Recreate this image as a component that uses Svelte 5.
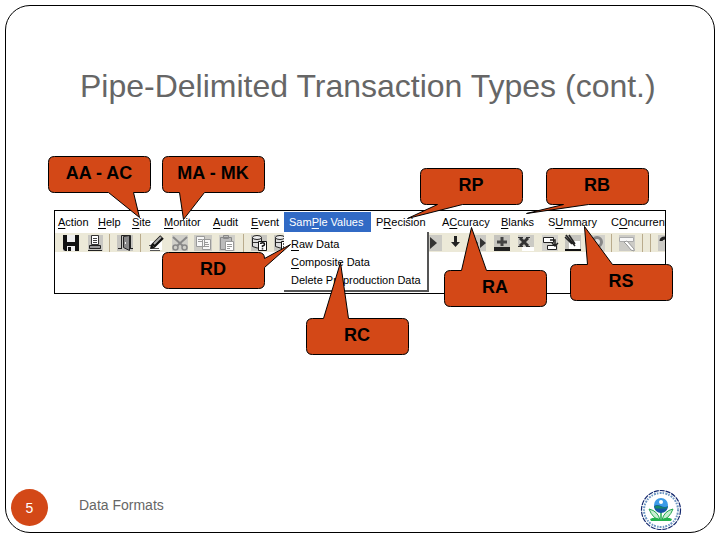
<script>
  const menus = [
    { pre: '', key: 'A', post: 'ction', w: 40 },
    { pre: '', key: 'H', post: 'elp', w: 34 },
    { pre: '', key: 'S', post: 'ite', w: 32 },
    { pre: '', key: 'M', post: 'onitor', w: 49 },
    { pre: '', key: 'A', post: 'udit', w: 38 },
    { pre: '', key: 'E', post: 'vent', w: 36 },
    { pre: 'Sam', key: 'P', post: 'le Values', w: 89, open: true },
    { pre: 'P', key: 'R', post: 'ecision', w: 66 },
    { pre: 'A', key: 'C', post: 'curacy', w: 59 },
    { pre: '', key: 'B', post: 'lanks', w: 47 },
    { pre: 'S', key: 'U', post: 'mmary', w: 63 },
    { pre: 'C', key: 'O', post: 'ncurrent', w: 64 }
  ];

  const tools = [
    ['save', 24], ['print', 23], ['sep', 7], ['door', 24], ['sep', 7],
    ['pen', 24], ['cut', 23], ['copy', 24], ['paste', 24], ['sep', 8],
    ['query', 23], ['run', 23], ['gap', 129], ['play', 24], ['down', 20],
    ['forward', 24], ['plus', 24], ['cross', 24], ['export', 23],
    ['edit', 24], ['lens', 23], ['sep', 7], ['form', 24], ['sep', 6],
    ['sep', 10], ['help', 22]
  ];

  const callouts = [
    { text: 'AA - AC', x: 48, y: 156, tx: 99, tail: 'bottom', a: 60, b: 85, px: 91, py: 61 },
    { text: 'MA - MK', x: 162, y: 156, tx: 213, tail: 'bottom', a: 17, b: 42, px: 21, py: 63 },
    { text: 'RD', x: 162, y: 252, tx: 213, tail: 'right', a: 6, b: 15, px: 128, py: -8 },
    { text: 'RC', x: 306, y: 318, tx: 357, tail: 'top', a: 17, b: 42, px: 34, py: -56 },
    { text: 'RP', x: 420, y: 168, tx: 471, tail: 'bottom', a: 17, b: 42, px: -13, py: 50 },
    { text: 'RB', x: 546, y: 168, tx: 597, tail: 'bottom', a: 17, b: 42, px: -20, py: 45 },
    { text: 'RA', x: 444, y: 270, tx: 495, tail: 'top', a: 17, b: 42, px: 27, py: -43 },
    { text: 'RS', x: 570, y: 264, tx: 621, tail: 'top', a: 17, b: 42, px: 14, py: -38 }
  ];

  function outline(c) {
    const top = c.tail === 'top' ? `H${c.a}L${c.px} ${c.py}L${c.b} 0` : '';
    const right = c.tail === 'right' ? `V${c.a}L${c.px} ${c.py}L102 ${c.b}` : '';
    const bottom = c.tail === 'bottom' ? `H${c.b}L${c.px} ${c.py}L${c.a} 36` : '';
    return `M6 0${top}H96Q102 0 102 6${right}V30Q102 36 96 36${bottom}H6Q0 36 0 30V6Q0 0 6 0Z`;
  }
</script>

<main class="slide">
  <section class="frame">
    <h1>Pipe-Delimited Transaction Types (cont.)</h1>

    <div class="window">
      <nav class="menubar" aria-label="Application menu">
        {#each menus as m}
          <div class="menu" style="width: {m.w}px">
            <button class:open={m.open}>{m.pre}<u>{m.key}</u>{m.post}</button>
            {#if m.open}
              <div class="dropdown">
                <button><u>R</u>aw Data</button>
                <button><u>C</u>omposite Data</button>
                <button>Delete Preproduction Data</button>
              </div>
            {/if}
          </div>
        {/each}
      </nav>

      <div class="toolbar">
        {#each tools as [name, w]}
          {#if name === 'sep' || name === 'gap'}
            <span class={name} style="width: {w}px"></span>
          {:else}
            <button class="tool" aria-label={name} style="width: {w}px">
              <svg width="18" height="18" viewBox="0 0 18 18" fill="none">
                {#if name === 'save'}
                  <path fill="#bdbdbd" d="M1 1h16v16H1z" />
                  <path fill="#111" d="M1 1h16v16H3l-2-2z" />
                  <path fill="#eee" d="M5 1h8v7H5zM5 12h8v5H5z" />
                  <path fill="#111" d="M6 13h3v4H6z" />
                {:else if name === 'print'}
                  <path fill="#c8c7c2" d="M2 1h15v16H2z" />
                  <path fill="#fff" stroke="#333" d="M5.500 1.500h7v9h-7z" />
                  <path stroke="#444" d="M7 4.500h4M7 6.500h4M7 8.500h4" />
                  <path fill="#999" stroke="#222" d="M3.500 11.500h11v3h-11z" />
                  <path stroke="#222" d="M2 16.500h14" />
                {:else if name === 'door'}
                  <path fill="#c6c5c0" d="M1 1h16v16H1z" />
                  <path stroke="#222" d="M5.500 14V1.500h9V15M2 14.500h4M14 14.500h3" />
                  <path fill="#888" stroke="#222" d="M7.500 2.500l6-1v15l-6-3z" />
                  <path fill="#eee" d="M9 8h1v2H9z" />
                {:else if name === 'pen'}
                  <path fill="#fff" d="M3 7h12v9H3z" />
                  <path stroke="#555" d="M2 11.500h4M4 14.500h8M3 16.500h10" />
                  <path stroke="#111" stroke-width="5" d="M6 12l9-9" />
                  <path stroke="#aaa" stroke-width="2" d="M7 10l7-7" />
                  <path fill="#111" d="M4 10l4 4-5 1z" />
                {:else if name === 'cut'}
                  <path fill="#d0cfc9" d="M1 1h16v16H1z" />
                  <path stroke="#888" stroke-width="2" d="M2 3l10 9M16 3L6 12" />
                  <circle cx="4.500" cy="13.500" r="2.500" stroke="#888" stroke-width="1.500" />
                  <circle cx="13.500" cy="13.500" r="2.500" stroke="#888" stroke-width="1.500" />
                {:else if name === 'copy'}
                  <path fill="#cccbc5" d="M0 1h18v16H0z" />
                  <path fill="#f8f8f8" stroke="#999" d="M2.500 2.500h8v10h-8zM8.500 5.500h8v10h-8z" />
                  <path stroke="#999" d="M4 5.500h4M4 7.500h4M10 8.500h4M10 10.500h5M10 12.500h5" />
                {:else if name === 'paste'}
                  <path fill="#d0cfc9" d="M1 1h16v16H1z" />
                  <path fill="#bbb" stroke="#888" d="M2.500 3.500h11v12h-11zM5.500 1.500h5v3h-5z" />
                  <path fill="#fff" stroke="#999" d="M7.500 7.500h8v9h-8z" />
                  <path stroke="#999" d="M9 10.500h5M9 12.500h5M9 14.500h3" />
                {:else if name === 'query' || name === 'run'}
                  <path fill="#c7c6c0" d="M1 1h16v16H1z" />
                  <path fill="#ddd" stroke="#222" d="M2.500 3.500v9q5 3 9 0v-9z" />
                  <ellipse cx="7" cy="3.500" rx="4.500" ry="2" fill="#eee" stroke="#222" />
                  <path stroke="#333" d="M3 8.500h8" />
                  <path fill="#fff" stroke="#111" d="M8.500 7.500h8v9h-8z" />
                  {#if name === 'query'}
                    <path stroke="#111" stroke-width="1.500" d="M10.500 10q0-1.200 2-1.200t2 1.700q0 1.200-2 1.500v1.200M12.500 14.200v1.300" />
                  {:else}
                    <path stroke="#555" stroke-width="2" d="M10 10h5M10 13h5M12 8v8" />
                  {/if}
                {:else if name === 'play'}
                  <path fill="#cbcac4" d="M1 1h16v16H1z" />
                  <path fill="#333" d="M5 3l7 6-7 6z" />
                {:else if name === 'down'}
                  <path fill="#222" d="M7 2h3v6h3l-4.500 5L4 8h3z" />
                {:else if name === 'forward'}
                  <path fill="#cbcac4" d="M1 1h16v16H1z" />
                  <path fill="#333" d="M3 3l6 6-6 6zM11 4l6 5-6 5z" />
                {:else if name === 'plus'}
                  <path fill="#c5c4be" d="M1 1h16v12H1z" />
                  <path fill="#222" d="M1 13h16v4H1z" />
                  <path stroke="#444" stroke-width="3" d="M9 3v9M4 8h10" />
                {:else if name === 'cross'}
                  <path fill="#cbcac4" d="M1 1h16v12H1z" />
                  <path fill="#fff" d="M5 13h12v4H5z" />
                  <path stroke="#333" stroke-width="3" d="M3 4l8 8M11 4l-8 8" />
                  <path stroke="#333" d="M1 3.500h5M9 3.500h4M1 12.500h5M9 12.500h4" />
                {:else if name === 'export'}
                  <path fill="#d2d1cb" d="M1 1h16v16H1z" />
                  <path fill="#fff" stroke="#222" d="M2.500 3.500h10v5h-10zM6.500 11.500h9v4h-9z" />
                  <path stroke="#222" stroke-width="1.500" d="M9 6h5v6M11 9l3 3 3-3" />
                {:else if name === 'edit'}
                  <path fill="#c5c4be" d="M1 1h16v15H1z" />
                  <path fill="#fff" d="M5 7h11v9H5z" />
                  <path stroke="#222" stroke-width="1.500" d="M1 3l7 7M5 1l6 9M2 1l9 11" />
                  <path stroke="#111" stroke-width="2" d="M1 16h16" />
                {:else if name === 'lens'}
                  <path fill="#d2d1cb" d="M1 1h16v16H1z" />
                  <circle cx="9" cy="8" r="4.500" stroke="#888" stroke-width="3" fill="#ddd" />
                {:else if name === 'form'}
                  <path fill="#cccbc6" d="M1 1h16v16H1z" />
                  <path fill="#f8f8f8" stroke="#aaa" d="M1.500 3.500h14v4h-14z" />
                  <path fill="#fff" stroke="#999" d="M6 8l3-1 7 8v2l-3-1-4-5z" />
                {:else}
                  <path fill="#cccbc6" d="M1 1h16v16H1z" />
                  <path stroke="#222" stroke-width="3" d="M4 7q0-3 4-3 5 0 5 3 0 2-3 3v4" />
                {/if}
              </svg>
            </button>
          {/if}
        {/each}
      </div>
    </div>

    <footer>
      <span class="page">5</span>
      <span class="label">Data Formats</span>
      <svg class="seal" width="42" height="42" viewBox="0 0 42 42" fill="none" role="img" aria-label="Agency seal">
        <circle cx="21" cy="21" r="19.500" fill="#fff" stroke="#14286e" stroke-width="1.200" stroke-dasharray="5 1" />
        <circle cx="21" cy="21" r="17" stroke="#6f97c2" stroke-width="2" stroke-dasharray="1.500 1.300 2 1" />
        <path stroke="#1fa84c" stroke-width="1.500" d="M21 22v10" />
        <path fill="#c8efd2" stroke="#1fa84c" d="M20 31Q13 30 9 20q9 2 11 11zM22 31q7-1 11-11-9 2-11 11z" />
        <path fill="#22b34d" d="M10 30q6-3 11 1 5-4 11-1l-1 2H11z" />
        <circle cx="21" cy="16" r="7" fill="#3c9be8" />
        <path fill="#1555a5" d="M14 17q3-2 7 0t7 0a7 7 0 0 1-14 0z" />
        <path fill="#168a68" d="M14.500 17.500q3-2 6.500 0t6.500 0l-1 2h-11z" />
        <circle cx="21" cy="13" r="2" fill="#fff" />
      </svg>
    </footer>
  </section>

  <svg class="callouts" width="720" height="540" viewBox="0 0 720 540">
    {#each callouts as c}
      <path d={outline(c)} transform="translate({c.x + 0.5} {c.y + 0.5})" />
      <text x={c.tx} y={c.y + 23}>{c.text}</text>
    {/each}
  </svg>
</main>

<style>
  :global(body) {
    background: #fff;
  }
  .slide {
    position: relative;
    box-sizing: border-box;
    min-height: 100vh;
    padding: 5px 5px 7px;
    display: flex;
    overflow: hidden;
    font-family: "Liberation Sans", Arial, sans-serif;
  }
  .frame {
    flex: 1;
    display: flex;
    flex-direction: column;
    min-width: 0;
    border: 1px solid #000;
    border-radius: 25px;
  }
  h1 {
    margin: 62px 0 0 74px;
    font-size: 32px;
    line-height: 37px;
    font-weight: 400;
    color: #666;
    white-space: nowrap;
  }
  button {
    margin: 0;
    padding: 0;
    border: 0;
    background: none;
    font: inherit;
    color: inherit;
    text-align: left;
    white-space: nowrap;
  }
  .window {
    box-sizing: border-box;
    height: 84px;
    margin: 105px 48px 0;
    border: 1px solid #000;
  }
  .menubar {
    display: flex;
    height: 22px;
    padding-top: 1px;
    box-sizing: border-box;
    font-size: 11px;
    line-height: 20px;
    clip-path: inset(0 0 -80px 0);
  }
  .menu {
    position: relative;
    flex: none;
  }
  .menu > button {
    display: block;
    height: 20px;
    padding-left: 3px;
  }
  .menu > .open {
    width: 87px;
    padding-left: 5px;
    background: #316ac5;
    color: #fff;
  }
  u {
    text-underline-offset: 2px;
  }
  .dropdown {
    position: absolute;
    z-index: 1;
    top: 20px;
    left: 0;
    box-sizing: border-box;
    width: 145px;
    height: 60px;
    padding-top: 3px;
    display: flex;
    flex-direction: column;
    background: #fff;
    border-right: 2px solid #555;
    border-bottom: 2px solid #555;
  }
  .dropdown button {
    height: 18px;
    line-height: 18px;
    padding-left: 7px;
  }
  .toolbar {
    display: flex;
    align-items: center;
    height: 19px;
    padding-left: 4px;
    background: #ece9d8;
    overflow: hidden;
  }
  .tool,
  .sep,
  .gap {
    flex: none;
    display: flex;
    justify-content: center;
    height: 18px;
  }
  .sep::before {
    content: "";
    width: 1px;
    background: #b9ab8c;
  }
  footer {
    display: flex;
    align-items: flex-start;
    margin-top: auto;
    padding: 0 32px 1px 5px;
  }
  .page {
    width: 37px;
    height: 37px;
    border-radius: 50%;
    background: #d34817;
    color: #fff;
    font-size: 14px;
    line-height: 38px;
    text-align: center;
  }
  .label {
    margin: 8px auto 0 31px;
    font-size: 14px;
    line-height: 16px;
    color: #666;
  }
  .callouts {
    position: absolute;
    top: 0;
    left: 0;
    pointer-events: none;
  }
  .callouts path {
    fill: #d34817;
    stroke: #000;
    stroke-width: 1;
  }
  .callouts text {
    font-size: 18px;
    font-weight: 700;
    text-anchor: middle;
    fill: #000;
  }
</style>
